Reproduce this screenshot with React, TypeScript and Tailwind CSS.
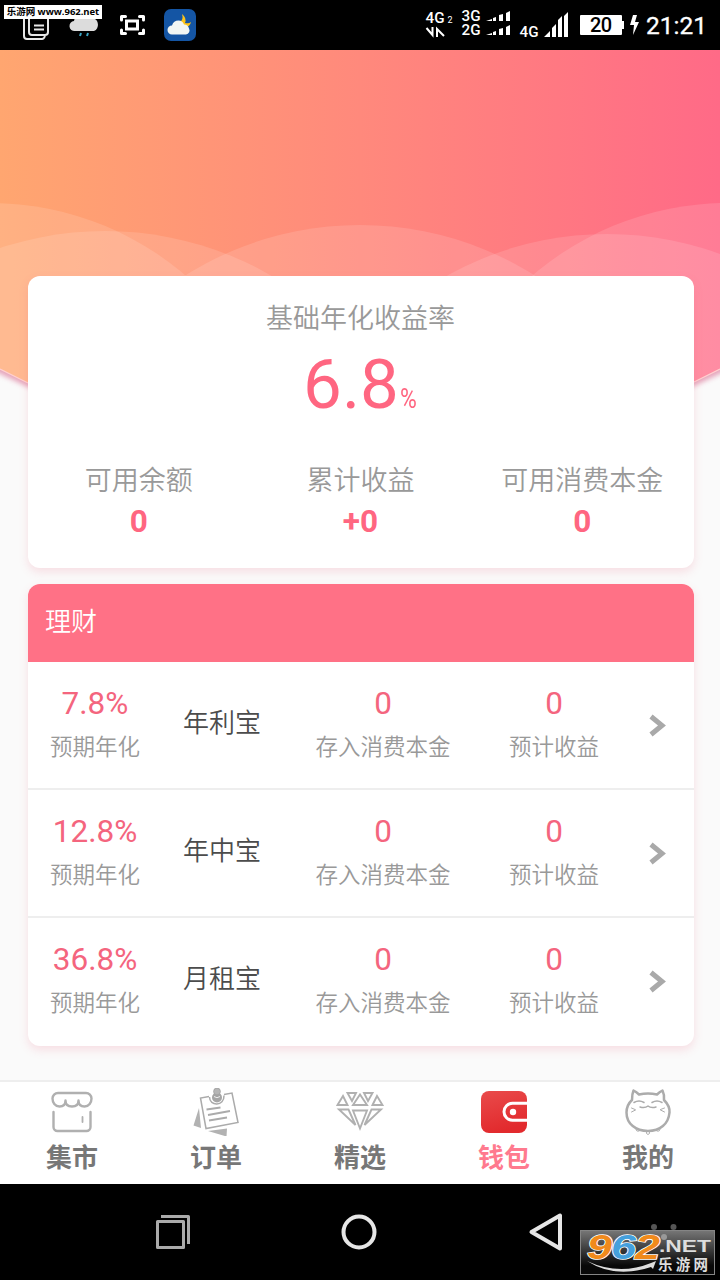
import React from "react";

const PRODUCTS = [
  { rate: "7.8%", name: "年利宝" },
  { rate: "12.8%", name: "年中宝" },
  { rate: "36.8%", name: "月租宝" },
];

const SUMMARY = [
  { label: "可用余额", value: "0" },
  { label: "累计收益", value: "+0" },
  { label: "可用消费本金", value: "0" },
];

function StatusLeft() {
  return (
    <svg width="240" height="50" viewBox="0 0 240 50" fill="none">
      <g stroke="#e8e8e8" strokeWidth="2">
        <path d="M24 18v18q0 3 3 3h15q2 0 3-3" />
        <rect x="29" y="14" width="19" height="21" rx="3" />
        <path d="M34 25.500h10M34 29.500h10" />
      </g>
      <path d="M75 31a5 5 0 0 1-1-10a10 10 0 0 1 19-3a7 7 0 0 1 1 13z" fill="#dcdcdc" />
      <path d="M81 33l-1 3M88 33l-1 3" stroke="#3aa5c5" strokeWidth="2" />
      <g stroke="#fff" strokeWidth="3" strokeLinecap="round" strokeLinejoin="round">
        <path d="M121.500 20v-3.500h4M139.500 16.500h4v3.500M143.500 30v3.500h-4M125.500 33.500h-4V30" />
        <rect x="126.500" y="21" width="11" height="8" strokeLinejoin="miter" />
      </g>
      <rect x="164" y="9" width="32" height="32" rx="7" fill="#1455a4" />
      <path d="M182 14q5 4 3 9q4 1 6-1q-1 5-6 5h-6v-4q5-3 3-9z" fill="#fcc419" />
      <path d="M172 34.500a4.500 4.500 0 0 1 0-9q1.500-5 6.500-5q4 0 5.500 4q4 0 5 4a4 4 0 0 1-3 6z" fill="#f1f6f4" />
    </svg>
  );
}

function StatusRight() {
  return (
    <svg width="310" height="50" viewBox="410 0 310 50" fill="#fff" fontFamily="Roboto, sans-serif">
      <text x="425.500" y="23" fontSize="14" fontWeight="500" textLength="19" lengthAdjust="spacingAndGlyphs">4G</text>
      <text x="447.500" y="22.500" fontSize="9">2</text>
      <path d="M426.500 28l6 7V27M437 37v-8l7 7" fill="none" stroke="#fff" strokeWidth="2" />
      <text x="461.500" y="21" fontSize="14" fontWeight="500" textLength="19" lengthAdjust="spacingAndGlyphs">3G</text>
      <text x="461.500" y="35" fontSize="14" fontWeight="500" textLength="19" lengthAdjust="spacingAndGlyphs">2G</text>
      <path d="M486 21l6-2v2zM493 21v-3l3-1v4zM499 21v-6l4-1v7zM506 21v-8l4-2v10z" />
      <path d="M486 35l6-2v2zM493 35v-3l3-1v4zM499 35v-6l4-1v7zM506 35v-8l4-2v10z" />
      <text x="519.500" y="37" fontSize="14" fontWeight="500" textLength="19" lengthAdjust="spacingAndGlyphs">4G</text>
      <path d="M544 37l6-6v6zM552 37v-9l4-4v13zM558 37V20l4-4v21zM564 37V16l4-4v25z" />
      <path d="M580 16q0-1 1-1h40q1 0 1 1v5h2v8h-2v5q0 1-1 1h-40q-1 0-1-1z" />
      <text x="590" y="32" fontSize="20" fontWeight="500" fill="#000" textLength="22">20</text>
      <path d="M633 15h4l-2 7h4l-6 13l1-10h-4z" />
      <text x="646" y="34" fontSize="24.500" stroke="#fff" strokeWidth="0.300" textLength="61">21:21</text>
    </svg>
  );
}

function HeroBackdrop() {
  return (
    <svg className="absolute left-0 top-0" width="720" height="420" viewBox="0 50 720 420">
      <defs>
        <linearGradient id="heroFill" gradientUnits="userSpaceOnUse" x1="0" y1="0" x2="720" y2="0">
          <stop offset="0" stopColor="#ffa670" />
          <stop offset="0.500" stopColor="#ff897c" />
          <stop offset="1" stopColor="#ff6a87" />
        </linearGradient>
        <filter id="heroShadow" x="-10%" y="-10%" width="120%" height="130%">
          <feGaussianBlur stdDeviation="2.500" />
        </filter>
        <clipPath id="heroClip">
          <path d="M0 50H720V369L694 382Q360 520 28 383L0 369z" />
        </clipPath>
      </defs>
      <path d="M-10 50H730V369L694 386Q360 524 28 387L-10 369z" fill="#d86b90" opacity="0.600" filter="url(#heroShadow)" />
      <g clipPath="url(#heroClip)">
        <rect y="50" width="720" height="400" fill="url(#heroFill)" />
        <g fill="#fff" fillOpacity="0.125">
          <circle cx="-10" cy="503" r="300" />
          <circle cx="105" cy="563" r="332" />
          <circle cx="360" cy="553" r="328" />
          <circle cx="607" cy="562" r="328" />
          <circle cx="728" cy="503" r="300" />
        </g>
      </g>
      <path d="M0 369L28 383M694 382L720 369" stroke="#ffd0d0" strokeWidth="1.200" />
    </svg>
  );
}

function MarketIcon() {
  return (
    <svg width="48" height="48" viewBox="48 1088 48 48" fill="none" stroke="#b0b0b0" strokeWidth="2.400" strokeLinecap="round" strokeLinejoin="round">
      <path d="M58 1093h28a5.500 5.500 0 0 1 5.500 5.500c0 4-2.500 8-7 8-4 0-6-2-6-6 0 4-2.500 6-6.500 6s-6.500-2-6.500-6c0 4-2 6-6 6-4.500 0-7-4-7-8A5.500 5.500 0 0 1 58 1093z" />
      <path d="M53.500 1112v15a4 4 0 0 0 4 4h29a4 4 0 0 0 4-4v-15" />
      <path d="M82.500 1117v5" strokeWidth="1.800" />
    </svg>
  );
}

function OrderIcon() {
  return (
    <svg width="48" height="48" viewBox="192 1088 48 48" fill="none" stroke="#ababab" strokeWidth="1.500">
      <path d="M199 1108l-5.500 17.500 7.500 2.500zM208 1131l19-2.500-.5 8z" fill="#b2b2b2" stroke="none" />
      <path d="M209 1096.500l-8.500 1.500 5.500 30.500 32-6-6-29.500-8 1.500" />
      <path d="M209.500 1097c0 9.500 15 9.500 14.500-1.500" />
      <path d="M206.500 1109.500l14-2M208 1115l22-4M209 1120.500l18-3" strokeWidth="1.800" />
      <circle cx="217" cy="1097.500" r="5" fill="#a5a5a5" stroke="none" />
      <circle cx="217" cy="1091.500" r="3.400" fill="#b5b5b5" stroke="#a0a0a0" strokeWidth="0.800" />
      <path d="M214 1096.500q3 2.500 6 0" stroke="#eee" strokeWidth="1" />
    </svg>
  );
}

function DiamondIcon() {
  return (
    <svg width="48" height="48" viewBox="336 1088 48 48" fill="none" stroke="#b0b0b0" strokeWidth="1.900">
      <path d="M337.500 1105l5.500-9 4.500 9zM347.500 1093h8.500l-4 8zM353 1105l7-10.500 7 10.500zM364 1093h8.500l-4.500 8zM372.500 1105l4.500-9 5.500 9z" />
      <path d="M339 1109.500h9.500l7 15.500zM353 1110.500h14l-7 18zM371.500 1109.500h9.500l-16.500 15.500z" />
    </svg>
  );
}

function WalletIcon() {
  return (
    <svg width="48" height="48" viewBox="480 1088 48 48" fill="none">
      <defs>
        <linearGradient id="walletFill" x1="0" y1="0" x2="0.300" y2="1">
          <stop offset="0" stopColor="#e94b4b" />
          <stop offset="1" stopColor="#e22a2d" />
        </linearGradient>
      </defs>
      <rect x="481" y="1091" width="46" height="42" rx="8" fill="url(#walletFill)" />
      <path d="M527 1103.200h-14.500a8.500 8.500 0 0 0 0 17H527" stroke="#fff" strokeWidth="3" />
      <circle cx="513" cy="1112" r="3.200" fill="#fff" />
    </svg>
  );
}

function CatIcon() {
  return (
    <svg width="48" height="48" viewBox="624 1088 48 48" fill="none" stroke="#acacac" strokeLinecap="round" strokeLinejoin="round">
      <path d="M632 1100q0-6 1.500-9.500 3 1.500 5.500 4 9-2 18 0 2.500-2.500 5.500-4 2 4 1.500 9.500 6 6 5.500 12.500C668.500 1124 660 1131 648 1131S626.500 1124 626.500 1112.500Q626.500 1105 632 1100z" strokeWidth="2.500" />
      <path d="M634 1102.500q5-3 10 0M652 1102.500q5-3 10 0M640 1107q5 1.500 8-1 3 2.500 8 1" strokeWidth="1.500" />
      <path d="M631.500 1108l3.500 1.500M631.500 1112l4-2M660.500 1109.500l4-1.500M660.500 1110l4 2" strokeWidth="1" />
      <path d="M636 1129q0 3 3 2M657 1131q3 1 3-2M646.500 1132.500v1q1.500 2 3 0v-1" strokeWidth="1" />
    </svg>
  );
}

const TABS = [
  { label: "集市", icon: MarketIcon, active: false },
  { label: "订单", icon: OrderIcon, active: false },
  { label: "精选", icon: DiamondIcon, active: false },
  { label: "钱包", icon: WalletIcon, active: true },
  { label: "我的", icon: CatIcon, active: false },
];

function Metric({ value, label }: { value: string; label: string }) {
  return (
    <div className="flex flex-col items-center pt-[22px]">
      <div className="h-[40px] text-[31.5px] leading-[40px] text-[#f4657e]">{value}</div>
      <div className="mt-[6px] whitespace-nowrap text-[22.5px] leading-[34px] font-[350] text-[#999]">{label}</div>
    </div>
  );
}

function SiteBadge() {
  return (
    <svg className="absolute right-0 bottom-0" width="142" height="64" viewBox="578 1216 142 64">
      <defs>
        <linearGradient id="badgeFill" x1="0" y1="0" x2="0" y2="1">
          <stop offset="0" stopColor="#777" />
          <stop offset="0.800" stopColor="#080808" />
        </linearGradient>
      </defs>
      <circle cx="654" cy="1227" r="3" fill="#555" />
      <circle cx="673.500" cy="1227" r="3" fill="#555" />
      <rect x="580.500" y="1230.500" width="134" height="44" fill="url(#badgeFill)" stroke="#858585" />
      <circle cx="664" cy="1237" r="3" fill="#999" />
      <path d="M587 1261q32 15 64 2l5-2-3 8-2-2q-36 12-64-6z" fill="#ddd" />
      <g fontFamily="'Liberation Sans', sans-serif" fontWeight="700" fontStyle="italic" fontSize="35" stroke="#fff" strokeWidth="1.600" paintOrder="stroke">
        <text x="587" y="1258.500" fill="#f08a1c" textLength="25" lengthAdjust="spacingAndGlyphs">9</text>
        <text x="611" y="1258.500" fill="#45a0dc" textLength="25" lengthAdjust="spacingAndGlyphs">6</text>
        <text x="635" y="1258.500" fill="#f08a1c" textLength="25" lengthAdjust="spacingAndGlyphs">2</text>
      </g>
      <text x="659" y="1251.500" fill="#ddd" fontFamily="'Liberation Sans', sans-serif" fontWeight="700" fontSize="17" textLength="52" lengthAdjust="spacingAndGlyphs">.NET</text>
      <text x="658" y="1269.500" fill="#ddd" fontFamily="'Noto Sans CJK SC', sans-serif" fontWeight="700" fontSize="14.500" textLength="50">乐游网</text>
    </svg>
  );
}

export default function App() {
  return (
    <div className="relative flex h-[1280px] w-[720px] flex-col overflow-hidden bg-[#fafafa] font-['Roboto','Noto_Sans_CJK_SC',sans-serif]">
      <header className="relative flex h-[50px] shrink-0 justify-between bg-black">
        <StatusLeft />
        <StatusRight />
        <div className="absolute left-1 top-[5px] flex h-[14px] w-[98px] items-center justify-center whitespace-nowrap bg-white font-['Open_Sans','Noto_Sans_CJK_SC',sans-serif] text-[9.5px] leading-[14px] font-bold tracking-[-0.05px] text-black">
          乐游网 www.962.net
        </div>
      </header>

      <main className="relative h-[1030px] shrink-0 pt-[226px] pr-[26px] pl-[28px]">
        <HeroBackdrop />

        <section className="relative h-[292px] rounded-xl bg-white shadow-[0_4px_10px_rgba(240,100,130,0.180)]">
          <div className="pr-px">
            <h1 className="pt-[23px] text-center text-[27px] leading-[40px] font-[350] text-[#999]">基础年化收益率</h1>
            <div className="flex h-[98px] items-baseline justify-center pt-[1px] leading-[90px] text-[#ff6681]">
              <span className="text-[69px]">6.8</span>
              <span className="ml-px inline-block w-[18px] text-[27px]">
                <span className="inline-block origin-left scale-x-[0.85]">%</span>
              </span>
            </div>
            <div className="grid grid-cols-3 pt-[24px] text-center">
              {SUMMARY.map((item) => (
                <div key={item.label}>
                  <div className="text-[27px] leading-[40px] font-[350] text-[#999]">{item.label}</div>
                  <div className="text-[31.5px] leading-[42px] font-bold text-[#ff6681]">{item.value}</div>
                </div>
              ))}
            </div>
          </div>
        </section>

        <section className="relative mt-4 h-[462px] overflow-hidden rounded-xl bg-white shadow-[0_4px_10px_rgba(240,100,130,0.180)]">
          <h2 className="h-[78px] bg-[#ff7186] pl-[17px] text-[26px] leading-[76px] font-[350] text-white">理财</h2>
          {PRODUCTS.map((product) => (
            <div
              key={product.name}
              className="grid h-32 grid-cols-[134px_120px_202px_140px_66px] border-b-2 border-[#eee] last:border-b-0"
            >
              <Metric value={product.rate} label="预期年化" />
              <div className="pt-[41px] text-center text-[26px] leading-[40px] font-[350] text-[#4c4c4c]">{product.name}</div>
              <Metric value="0" label="存入消费本金" />
              <Metric value="0" label="预计收益" />
              <div className="flex justify-center pt-[50px]">
                <svg width="20" height="28" viewBox="0 0 20 28" fill="none" stroke="#a9a9a9" strokeWidth="5">
                  <path d="M4 4.500l11 9-11 9" />
                </svg>
              </div>
            </div>
          ))}
        </section>
      </main>

      <nav className="relative grid h-[104px] shrink-0 grid-cols-5 border-t-2 border-[#eee] bg-white">
        {TABS.map(({ label, icon: Icon, active }) => (
          <div key={label} className="flex flex-col items-center pt-[6px]">
            <Icon />
            <span
              className={
                active
                  ? "mt-[2px] text-[26px] leading-[40px] font-bold text-[#ff7a8e]"
                  : "mt-[2px] text-[26px] leading-[40px] font-bold text-[#777]"
              }
            >
              {label}
            </span>
          </div>
        ))}
      </nav>

      <footer className="relative h-[96px] shrink-0 bg-black">
        <svg width="720" height="96" viewBox="0 1184 720 96" fill="none" strokeWidth="3" strokeLinejoin="round">
          <path d="M161 1216.500h27.500V1244" stroke="#aaa" />
          <rect x="157.500" y="1221.500" width="26" height="26" stroke="#aaa" />
          <circle cx="359" cy="1232" r="15.500" stroke="#e6e6e6" strokeWidth="4" />
          <path d="M560 1215.500v33L531.500 1232z" stroke="#e6e6e6" strokeWidth="4" />
        </svg>
        <SiteBadge />
      </footer>
    </div>
  );
}
